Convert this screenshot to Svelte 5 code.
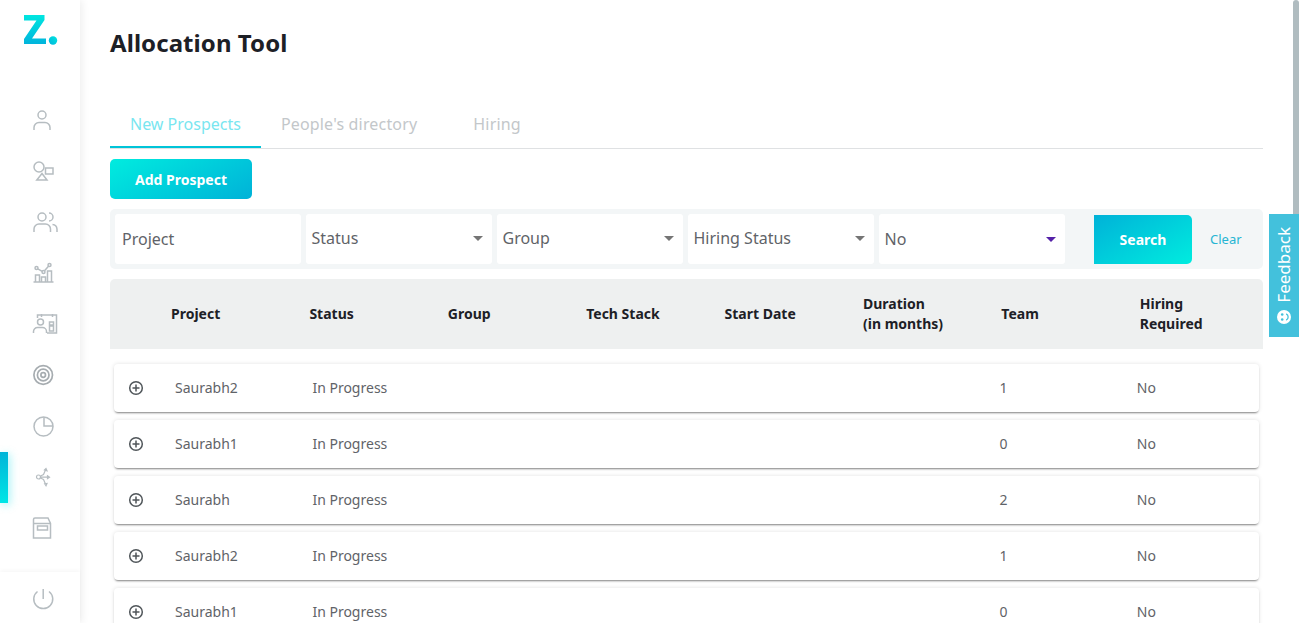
<script>
  const headers = ["Project", "Status", "Group", "Tech Stack", "Start Date", "Duration\n(in months)", "Team", "Hiring\nRequired"];
  const filters = ["Status", "Group", "Hiring Status"];
  const rows = [
    { name: "Saurabh2", team: 1 },
    { name: "Saurabh1", team: 0 },
    { name: "Saurabh", team: 2 },
    { name: "Saurabh2", team: 1 },
    { name: "Saurabh1", team: 0 }
  ];
</script>

<div class="page">
  <aside class="sidebar">
    <div class="logo">
      <svg width="36" height="34" viewBox="0 0 36 34">
        <defs>
          <linearGradient id="logoGrad" x1="0" y1="0" x2="0" y2="1">
            <stop offset="0" stop-color="#00e6e0" />
            <stop offset="1" stop-color="#00b4dc" />
          </linearGradient>
          <linearGradient id="dotGrad" x1="0" y1="1" x2="1" y2="0">
            <stop offset="0" stop-color="#00b4dc" />
            <stop offset="1" stop-color="#00e6e0" />
          </linearGradient>
        </defs>
        <path d="M0 1H20.500V6L8 24.500H22V30H0V25L12.500 6.500H0Z" fill="url(#logoGrad)" />
        <circle cx="29" cy="26.500" r="4.200" fill="url(#dotGrad)" />
      </svg>
    </div>
    <nav class="nav">
      <div class="nav-item">
        <svg width="24" height="24" viewBox="0 0 24 24">
          <circle cx="12" cy="7" r="4" />
          <path d="M4 22v-2.500a5 5 0 0 1 5-5h6a5 5 0 0 1 5 5V22" />
        </svg>
      </div>
      <div class="nav-item">
        <svg width="24" height="24" viewBox="0 0 24 24">
          <circle cx="9" cy="8" r="5" />
          <rect x="15.500" y="9" width="7.500" height="6" />
          <path d="M12 14.500l5 6.500H6.800z" />
        </svg>
      </div>
      <div class="nav-item wide">
        <svg width="26" height="24" viewBox="0 0 26 24">
          <circle cx="10" cy="7" r="4" />
          <path d="M2 22v-3a5 5 0 0 1 5-5h6.500a5 5 0 0 1 5 5v3" />
          <path d="M17 3a4 4 0 0 1 0 8" />
          <path d="M20.500 14.500a5 5 0 0 1 4.500 4.500v3" />
        </svg>
      </div>
      <div class="nav-item">
        <svg width="24" height="24" viewBox="0 0 24 24">
          <path d="M3.500 21h20" />
          <path d="M5.500 21v-7h4v7M11.500 21v-5h4v5M17.500 21V10h4v11" />
          <circle cx="6.500" cy="7" r="1.500" />
          <circle cx="13.500" cy="11" r="1.500" />
          <circle cx="19.500" cy="4" r="1.500" />
          <path d="M7.800 7.800l4.400 2.500M14.500 9.800l4-4.600" />
        </svg>
      </div>
      <div class="nav-item wide">
        <svg width="26" height="24" viewBox="0 0 26 24">
          <path d="M5.500 6V3h19v18H15" />
          <path d="M9.500 2v3M20.500 2v3" />
          <circle cx="8.500" cy="10" r="3" />
          <path d="M1.500 21v-1.500a4 4 0 0 1 4-4h5a4 4 0 0 1 4 4V21" />
          <path d="M17.500 10h4v3h-4zM17.500 14h4v5h-4z" />
        </svg>
      </div>
      <div class="nav-item">
        <svg class="dark" width="24" height="24" viewBox="0 0 24 24">
          <circle cx="13.200" cy="12" r="9.300" />
          <circle cx="13.200" cy="12" r="5.800" />
          <circle cx="13.200" cy="12" r="2.300" />
        </svg>
      </div>
      <div class="nav-item">
        <svg width="24" height="24" viewBox="0 0 24 24">
          <circle cx="13.500" cy="12.500" r="9.500" />
          <path d="M14 3v9h9" />
        </svg>
      </div>
      <div class="nav-item active">
        <svg class="thin" width="24" height="24" viewBox="0 0 24 24">
          <circle cx="8.500" cy="12" r="2" />
          <path d="M10.500 11l3-1.500 2-4.500M10.500 12.200H19M10.500 13l3 1.500 2 4.500" />
          <path d="M14.500 5l1.500-1.500 1 2.200zM17.500 10.800l2 1.400-2 1.400zM14.700 18.800l2.300-.3-1 2.200z" />
        </svg>
      </div>
      <div class="nav-item">
        <svg width="24" height="24" viewBox="0 0 24 24">
          <path d="M3.500 22V3.500A1.500 1.500 0 0 1 5 2H18l2.500 5.500V22Z" />
          <path d="M3.500 7.500H20.500" />
          <rect x="7.500" y="10" width="10" height="4" />
        </svg>
      </div>
    </nav>
    <div class="power">
      <svg width="24" height="24" viewBox="0 0 24 24">
        <path d="M13.200 3v10" />
        <path d="M7.500 5.500a9.500 9.500 0 1 0 11.500 0" />
      </svg>
    </div>
  </aside>

  <main class="main">
    <h1>Allocation Tool</h1>

    <div class="tabs">
      <div class="tab selected">New Prospects</div>
      <div class="tab">People's directory</div>
      <div class="tab hiring">Hiring</div>
    </div>

    <button class="add">Add Prospect</button>

    <div class="filters">
      <div class="field project">Project</div>
      {#each filters as f}
        <div class="field">{f}<span class="caret"></span></div>
      {/each}
      <div class="field no">No<span class="caret purple"></span></div>
      <button class="search">Search</button>
      <span class="clear">Clear</span>
    </div>

    <div class="thead">
      {#each headers as h}
        <div class="th">{h}</div>
      {/each}
    </div>

    {#each rows as r}
      <div class="row">
        <svg class="plus" width="16" height="16" viewBox="0 0 16 16">
          <circle cx="8" cy="8" r="6.300" />
          <path d="M8 4.500v7M4.500 8h7" />
        </svg>
        <span>{r.name}</span>
        <span>In Progress</span>
        <span>{r.team}</span>
        <span>No</span>
      </div>
    {/each}
  </main>

  <div class="thumb"></div>
  <div class="feedback">
    <span>Feedback</span>
    <svg width="16" height="16" viewBox="0 0 16 16">
      <circle cx="8" cy="8" r="7" fill="#fff" />
      <circle cx="5.500" cy="6.200" r="1.300" fill="#43c1dc" />
      <circle cx="10.500" cy="6.200" r="1.300" fill="#43c1dc" />
      <path d="M4.800 10.200a3.600 3.600 0 0 0 6.400 0" fill="none" stroke="#43c1dc" stroke-width="1.300" />
    </svg>
  </div>
</div>

<style>
  :global(body) {
    margin: 0;
    background: #fff;
    font-family: "Noto Sans", sans-serif;
    overflow: hidden;
  }

  .page {
    position: relative;
    display: flex;
    height: 623px;
    overflow: hidden;
  }

  .sidebar {
    width: 80px;
    flex-shrink: 0;
    display: flex;
    flex-direction: column;
    background: #fff;
    box-shadow: 2px 0 8px rgba(0, 0, 0, 0.07);
    z-index: 1;
  }

  .logo {
    height: 95px;
    padding: 14px 0 0 24px;
    box-sizing: border-box;
  }

  .logo svg {
    display: block;
  }

  .nav-item {
    height: 51px;
    display: flex;
    align-items: center;
    justify-content: center;
    position: relative;
    padding: 0 0 1px 3px;
    box-sizing: border-box;
  }

  .nav-item svg,
  .power svg {
    fill: none;
    stroke: #b6bdc1;
    stroke-width: 1.5;
  }

  .nav-item svg.dark {
    stroke: #a6acb0;
    stroke-width: 1.7;
  }

  .nav-item svg.thin {
    stroke-width: 1.2;
  }

  .nav-item.wide {
    padding-left: 9px;
  }

  .nav-item.active::before {
    content: "";
    position: absolute;
    left: 0;
    top: 0;
    width: 8px;
    height: 51px;
    background: linear-gradient(180deg, #00b4d8, #00e6e6);
    box-shadow: 2px 2px 8px rgba(0, 220, 230, 0.35);
  }

  .power {
    margin-top: 18px;
    flex: 1;
    display: flex;
    justify-content: center;
    padding: 14px 0 0 3px;
    box-shadow: 0 -2px 4px rgba(0, 0, 0, 0.03);
  }

  .main {
    flex: 1;
    min-width: 0;
    padding: 0 36px 0 30px;
  }

  h1 {
    margin: 0;
    padding-top: 26px;
    height: 74px;
    font-size: 24px;
    line-height: 33px;
    font-weight: 700;
    letter-spacing: 0.07px;
    color: #1d2026;
  }

  .tabs {
    display: flex;
    height: 48px;
    border-bottom: 1px solid #dfe1e3;
  }

  .tab {
    padding: 0 20px;
    font-size: 16px;
    line-height: 49px;
    letter-spacing: 0.17px;
    color: #c3c7ca;
    height: 48px;
    box-sizing: border-box;
  }

  .tab.selected {
    letter-spacing: 0;
    color: #79e6f0;
    border-bottom: 2px solid #00c4d8;
  }

  .tab.hiring {
    padding-left: 36px;
  }

  button {
    border: none;
    font-family: inherit;
    font-size: 14px;
    font-weight: 700;
    color: #fff;
  }

  .add {
    display: block;
    margin-top: 10px;
    width: 142px;
    height: 40px;
    border-radius: 5px;
    background: linear-gradient(150deg, #00ecdf, #00b2d8);
  }

  .filters {
    display: flex;
    align-items: center;
    gap: 5px;
    margin-top: 10px;
    height: 60px;
    padding: 0 5px;
    box-sizing: border-box;
    background: #f3f6f7;
    border-radius: 5px;
  }

  .field {
    width: 186px;
    height: 50px;
    flex-shrink: 0;
    box-sizing: border-box;
    display: flex;
    align-items: center;
    justify-content: space-between;
    padding: 0 9px 2px 5.500px;
    background: #fff;
    border-radius: 3px;
    font-size: 16px;
    color: #5f6368;
  }

  .field.project {
    padding: 0 7px;
  }

  .field.no {
    padding-bottom: 0;
  }

  .caret {
    width: 0;
    height: 0;
    border-left: 5px solid transparent;
    border-right: 5px solid transparent;
    border-top: 5px solid #757575;
  }

  .caret.purple {
    border-top-color: #5521a8;
  }

  .search {
    width: 98px;
    height: 49px;
    margin-left: 24px;
    border-radius: 0 5px 5px 0;
    background: linear-gradient(150deg, #00b2d8, #00ecdf);
  }

  .clear {
    margin-left: 13px;
    font-size: 13px;
    color: #26b5d3;
  }

  .thead {
    display: grid;
    grid-template-columns: repeat(8, 138.400px);
    align-items: center;
    margin-top: 10px;
    height: 70px;
    padding-left: 61px;
    box-sizing: border-box;
    background: #eef0f0;
    border-radius: 5px 5px 0 0;
  }

  .th {
    font-size: 14px;
    line-height: 20px;
    font-weight: 700;
    color: #1d2026;
    white-space: pre-line;
  }

  .row {
    display: grid;
    grid-template-columns: 61px 137.400px 687px 137.400px 1fr;
    align-items: center;
    height: 48px;
    margin: 15px 4px 0;
    background: #fff;
    border-radius: 4px;
    box-shadow: 0 2px 2px -1px rgba(0, 0, 0, 0.45), 0 0 4px rgba(0, 0, 0, 0.12);
    font-size: 14px;
    color: #5f6368;
  }

  .row span {
    margin-bottom: 2px;
  }

  .row + .row {
    margin-top: 8px;
  }

  .plus {
    margin-left: 14px;
    fill: none;
    stroke: #50565a;
    stroke-width: 1.5;
  }

  .thumb {
    position: absolute;
    top: 0;
    right: 0;
    width: 6px;
    height: 240px;
    background: #b0bcc0;
    border-radius: 3px 3px 0 0;
  }

  .feedback {
    position: absolute;
    top: 214px;
    right: 0;
    width: 30px;
    height: 123px;
    background: #43c1dc;
    display: flex;
    flex-direction: column;
    align-items: center;
    justify-content: space-between;
    padding: 13px 0 12px;
    box-sizing: border-box;
    color: #fff;
    font-size: 17px;
  }

  .feedback span {
    writing-mode: vertical-rl;
    transform: rotate(180deg);
    line-height: 30px;
  }

  .feedback svg {
    transform: rotate(-90deg);
  }
</style>
